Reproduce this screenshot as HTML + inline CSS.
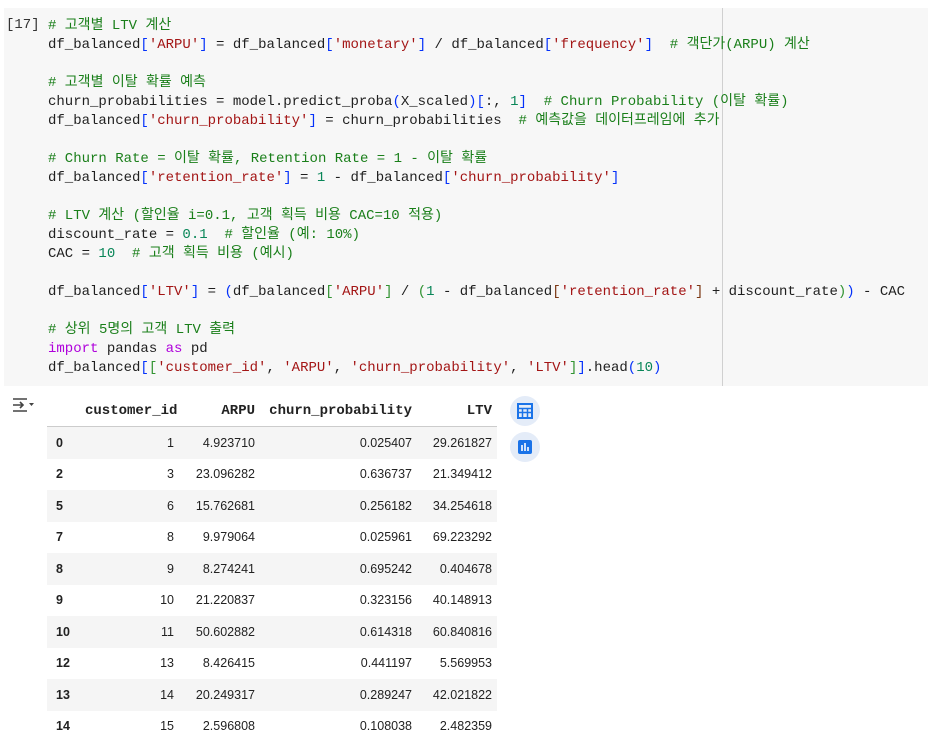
<!DOCTYPE html>
<html><head><meta charset="utf-8"><style>
body{margin:0;width:928px;height:746px;background:#fff;position:relative;overflow:hidden;font-family:"Liberation Sans","Noto Sans CJK KR",sans-serif}
.cell{position:absolute;left:4px;top:8px;width:924px;height:378px;background:#f7f7f7}
.ruler{position:absolute;left:722px;top:8px;width:1px;height:378px;background:#d0d0d0}
.prompt{position:absolute;left:6px;top:17px;font:14px "Liberation Mono",monospace;color:#333}
pre{position:absolute;left:48px;top:17px;margin:0;font:14px/19px "Liberation Mono","Noto Sans CJK KR",monospace;color:#1f1f1f}
.c{color:#1a7f1a}.s{color:#a31515}.b{color:#0431fa}.g{color:#319331}.y{color:#7b3814}.n{color:#098658}.k{color:#af00db}
table{position:absolute;left:47px;top:396px;border-collapse:collapse;font-size:12.5px;color:#222;table-layout:fixed;width:450px}
th{font:bold 14px "Liberation Mono",monospace;text-align:right;height:30px;padding:0 5px;border-bottom:1px solid #ccc;white-space:nowrap}
td{height:31.5px;padding:0 5px;text-align:right}
td:first-child{text-align:left;font-weight:bold;padding-left:9px}
tr:nth-child(even) td{background:#f5f5f5}
.ib{position:absolute;left:510px;width:30px;height:30px;border-radius:50%;background:#e4ecf8}
.ib i{position:absolute;left:8px;top:8px;width:14px;height:14px;background:#1a73e8;border-radius:2px}
</style></head><body>
<div class="cell"></div><div class="ruler"></div>
<div class="prompt">[17]</div>
<pre><span class="c"># 고객별 LTV 계산</span>
df_balanced<span class="b">[</span><span class="s">'ARPU'</span><span class="b">]</span> = df_balanced<span class="b">[</span><span class="s">'monetary'</span><span class="b">]</span> / df_balanced<span class="b">[</span><span class="s">'frequency'</span><span class="b">]</span>  <span class="c"># 객단가(ARPU) 계산</span>

<span class="c"># 고객별 이탈 확률 예측</span>
churn_probabilities = model.predict_proba<span class="b">(</span>X_scaled<span class="b">)[</span>:, <span class="n">1</span><span class="b">]</span>  <span class="c"># Churn Probability (이탈 확률)</span>
df_balanced<span class="b">[</span><span class="s">'churn_probability'</span><span class="b">]</span> = churn_probabilities  <span class="c"># 예측값을 데이터프레임에 추가</span>

<span class="c"># Churn Rate = 이탈 확률, Retention Rate = 1 - 이탈 확률</span>
df_balanced<span class="b">[</span><span class="s">'retention_rate'</span><span class="b">]</span> = <span class="n">1</span> - df_balanced<span class="b">[</span><span class="s">'churn_probability'</span><span class="b">]</span>

<span class="c"># LTV 계산 (할인율 i=0.1, 고객 획득 비용 CAC=10 적용)</span>
discount_rate = <span class="n">0.1</span>  <span class="c"># 할인율 (예: 10%)</span>
CAC = <span class="n">10</span>  <span class="c"># 고객 획득 비용 (예시)</span>

df_balanced<span class="b">[</span><span class="s">'LTV'</span><span class="b">]</span> = <span class="b">(</span>df_balanced<span class="g">[</span><span class="s">'ARPU'</span><span class="g">]</span> / <span class="g">(</span><span class="n">1</span> - df_balanced<span class="y">[</span><span class="s">'retention_rate'</span><span class="y">]</span> + discount_rate<span class="g">)</span><span class="b">)</span> - CAC

<span class="c"># 상위 5명의 고객 LTV 출력</span>
<span class="k">import</span> pandas <span class="k">as</span> pd
df_balanced<span class="b">[</span><span class="g">[</span><span class="s">'customer_id'</span>, <span class="s">'ARPU'</span>, <span class="s">'churn_probability'</span>, <span class="s">'LTV'</span><span class="g">]</span><span class="b">]</span>.head<span class="b">(</span><span class="n">10</span><span class="b">)</span></pre>
<svg style="position:absolute;left:11px;top:397px" width="24" height="18" viewBox="0 0 24 18" fill="none" stroke="#444" stroke-width="1.6"><path d="M2 2h14M2 8h10M9 5l3 3-3 3M2 14h14"/><path d="M18 6h5l-2.5 3z" fill="#444" stroke="none"/></svg>
<table>
<colgroup><col style="width:33px"><col style="width:99px"><col style="width:81px"><col style="width:157px"><col style="width:80px"></colgroup>
<tr><th></th><th>customer_id</th><th>ARPU</th><th>churn_probability</th><th>LTV</th></tr>
<tr><td>0</td><td>1</td><td>4.923710</td><td>0.025407</td><td>29.261827</td></tr>
<tr><td>2</td><td>3</td><td>23.096282</td><td>0.636737</td><td>21.349412</td></tr>
<tr><td>5</td><td>6</td><td>15.762681</td><td>0.256182</td><td>34.254618</td></tr>
<tr><td>7</td><td>8</td><td>9.979064</td><td>0.025961</td><td>69.223292</td></tr>
<tr><td>8</td><td>9</td><td>8.274241</td><td>0.695242</td><td>0.404678</td></tr>
<tr><td>9</td><td>10</td><td>21.220837</td><td>0.323156</td><td>40.148913</td></tr>
<tr><td>10</td><td>11</td><td>50.602882</td><td>0.614318</td><td>60.840816</td></tr>
<tr><td>12</td><td>13</td><td>8.426415</td><td>0.441197</td><td>5.569953</td></tr>
<tr><td>13</td><td>14</td><td>20.249317</td><td>0.289247</td><td>42.021822</td></tr>
<tr><td>14</td><td>15</td><td>2.596808</td><td>0.108038</td><td>2.482359</td></tr>
</table>
<div class="ib" style="top:396px"><svg style="position:absolute;left:7px;top:7px" width="16" height="16" viewBox="0 0 16 16"><rect x="1" y="1" width="14" height="14" fill="none" stroke="#1a73e8" stroke-width="2"/><path d="M1 5.5h14M1 9.5h14M5.5 5v10M10.5 5v10" stroke="#1a73e8" stroke-width="1.5"/></svg></div>
<div class="ib" style="top:432px"><i></i><svg style="position:absolute;left:8px;top:8px" width="14" height="14"><path d="M4 5v6M7 3v8M10 7v4" stroke="#fff" stroke-width="1.6"/></svg></div>
</body></html>
